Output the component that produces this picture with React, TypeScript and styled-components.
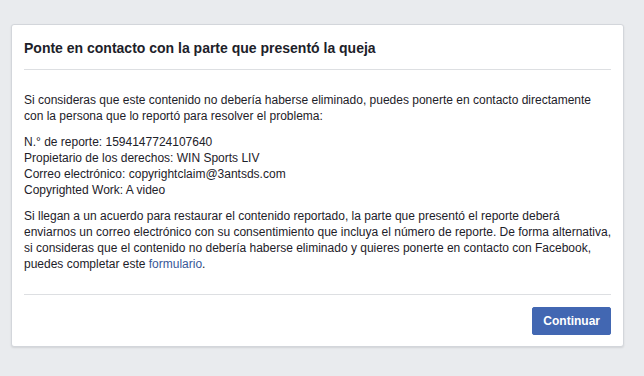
import styled, { createGlobalStyle } from 'styled-components';

const GlobalStyle = createGlobalStyle`
  html, body {
    margin: 0;
    padding: 0;
    background: #e9ebee;
  }
  body {
    font-family: "Liberation Sans", Arial, Helvetica, sans-serif;
    color: #1d2129;
  }
`;

const Page = styled.div`
  padding: 24px 20px 0 11px;
  min-height: 376px;
  box-sizing: border-box;
`;

const Dialog = styled.div`
  background: #fff;
  border: 1px solid #d3d6db;
  border-radius: 3px;
  box-shadow: 0 1px 2px rgba(0, 0, 0, 0.1);
  padding: 0 12px;
`;

const Header = styled.div`
  border-bottom: 1px solid #dddfe2;
  padding: 14px 0 12px;
`;

const Title = styled.h3`
  margin: 0;
  font-size: 14px;
  line-height: 18px;
  font-weight: bold;
  color: #1d2129;
`;

const Body = styled.div`
  padding: 22px 0 22px;
  font-size: 12px;
  line-height: 16px;
`;

const Paragraph = styled.p`
  margin: 0 0 10px;

  &:last-child {
    margin-bottom: 0;
  }
`;

const Link = styled.a`
  color: #385898;
  text-decoration: none;
  cursor: pointer;
`;

const Footer = styled.div`
  border-top: 1px solid #dddfe2;
  padding: 12px 0 11px;
  display: flex;
  justify-content: flex-end;
`;

const Button = styled.button`
  height: 28px;
  padding: 0 10px;
  background: #4267b2;
  border: 1px solid #4267b2;
  border-radius: 2px;
  color: #fff;
  font-family: "Liberation Sans", Arial, Helvetica, sans-serif;
  font-size: 12px;
  font-weight: bold;
  line-height: 26px;
  cursor: pointer;
`;

const reportInfo = [
  'N.° de reporte: 1594147724107640',
  'Propietario de los derechos: WIN Sports LIV',
  'Correo electrónico: copyrightclaim@3antsds.com',
  'Copyrighted Work: A video',
];

export default function App() {
  return (
    <>
      <GlobalStyle />
      <Page>
        <Dialog>
          <Header>
            <Title>Ponte en contacto con la parte que presentó la queja</Title>
          </Header>
          <Body>
            <Paragraph>
              Si consideras que este contenido no debería haberse eliminado, puedes ponerte en
              contacto directamente con la persona que lo reportó para resolver el problema:
            </Paragraph>
            <Paragraph>
              {reportInfo.map((line) => (
                <span key={line}>
                  {line}
                  <br />
                </span>
              ))}
            </Paragraph>
            <Paragraph>
              Si llegan a un acuerdo para restaurar el contenido reportado, la parte que presentó
              el reporte deberá enviarnos un correo electrónico con su consentimiento que incluya
              el número de reporte. De forma alternativa, si consideras que el contenido no
              debería haberse eliminado y quieres ponerte en contacto con Facebook, puedes
              completar este <Link>formulario</Link>.
            </Paragraph>
          </Body>
          <Footer>
            <Button>Continuar</Button>
          </Footer>
        </Dialog>
      </Page>
    </>
  );
}
